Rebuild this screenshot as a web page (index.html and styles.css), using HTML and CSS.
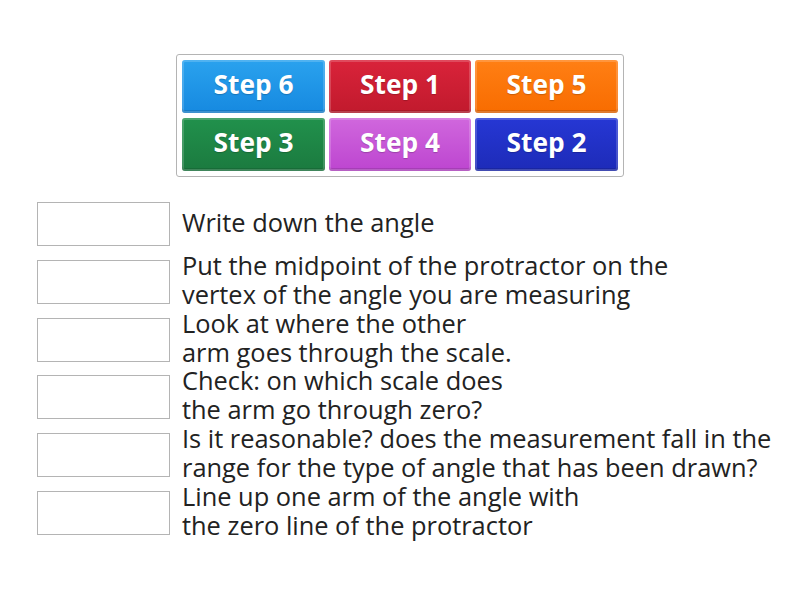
FILE: index.html
```html
<!DOCTYPE html>
<html>
<head>
<meta charset="utf-8">
<link rel="stylesheet" href="styles.css">
</head>
<body>
<div class="page">
  <div class="bank">
    <div class="tile blue">Step 6</div>
    <div class="tile red">Step 1</div>
    <div class="tile orange">Step 5</div>
    <div class="tile green">Step 3</div>
    <div class="tile purple">Step 4</div>
    <div class="tile navy">Step 2</div>
  </div>
  <div class="rows">
    <div class="row"><div class="slot"></div><div class="label">Write down the angle</div></div>
    <div class="row"><div class="slot"></div><div class="label">Put the midpoint of the protractor on the<br>vertex of the angle you are measuring</div></div>
    <div class="row"><div class="slot"></div><div class="label">Look at where the other<br>arm goes through the scale.</div></div>
    <div class="row"><div class="slot"></div><div class="label">Check: on which scale does<br>the arm go through zero?</div></div>
    <div class="row"><div class="slot"></div><div class="label">Is it reasonable? does the measurement fall in the<br>range for the type of angle that has been drawn?</div></div>
    <div class="row"><div class="slot"></div><div class="label">Line up one arm of the angle with<br>the zero line of the protractor</div></div>
  </div>
</div>
</body>
</html>
```

FILE: styles.css
```css
html, body {
  margin: 0;
  padding: 0;
  background: #fff;
}
body {
  font-family: "Open Sans", "Liberation Sans", sans-serif;
  color: #222;
}
.page {
  width: 800px;
  height: 600px;
  padding-top: 54px;
  box-sizing: border-box;
  display: flex;
  flex-direction: column;
}
.bank {
  align-self: flex-start;
  margin-left: 176px;
  width: 448px;
  box-sizing: border-box;
  border: 1px solid #b4b4b4;
  border-radius: 3px;
  padding: 5px;
  display: grid;
  grid-template-columns: 143px 142px 143px;
  grid-auto-rows: 53px;
  column-gap: 4px;
  row-gap: 5px;
}
.tile {
  border-radius: 3px;
  color: #fff;
  font-weight: 700;
  font-size: 26.3px;
  display: flex;
  align-items: center;
  justify-content: center;
  padding-bottom: 6px;
  box-sizing: border-box;
  text-shadow: 0 1px 1px rgba(0,0,0,0.2);
  box-shadow: inset 0 0 0 2px rgba(255,255,255,0.18), inset 0 -3px 0 rgba(0,0,0,0.12);
}
.blue { background: linear-gradient(#2aa2ee, #1689e0); }
.red { background: linear-gradient(#d9233a, #c11a2d); }
.orange { background: linear-gradient(#ff7f14, #f86c00); }
.green { background: linear-gradient(#21914c, #1b7a3f); }
.purple { background: linear-gradient(#d067dd, #bd45d0); }
.navy { background: linear-gradient(#2637d4, #1d2bb8); }
.rows {
  margin-top: 25px;
  margin-left: 37px;
  display: flex;
  flex-direction: column;
  gap: 13.8px;
}
.row {
  height: 44px;
  display: flex;
  align-items: center;
}
.slot {
  width: 133px;
  height: 44px;
  box-sizing: border-box;
  border: 1px solid #b4b4b4;
  flex: none;
}
.label {
  margin-left: 12px;
  margin-bottom: 4px;
  font-size: 25.4px;
  line-height: 29px;
  white-space: nowrap;
}
```
